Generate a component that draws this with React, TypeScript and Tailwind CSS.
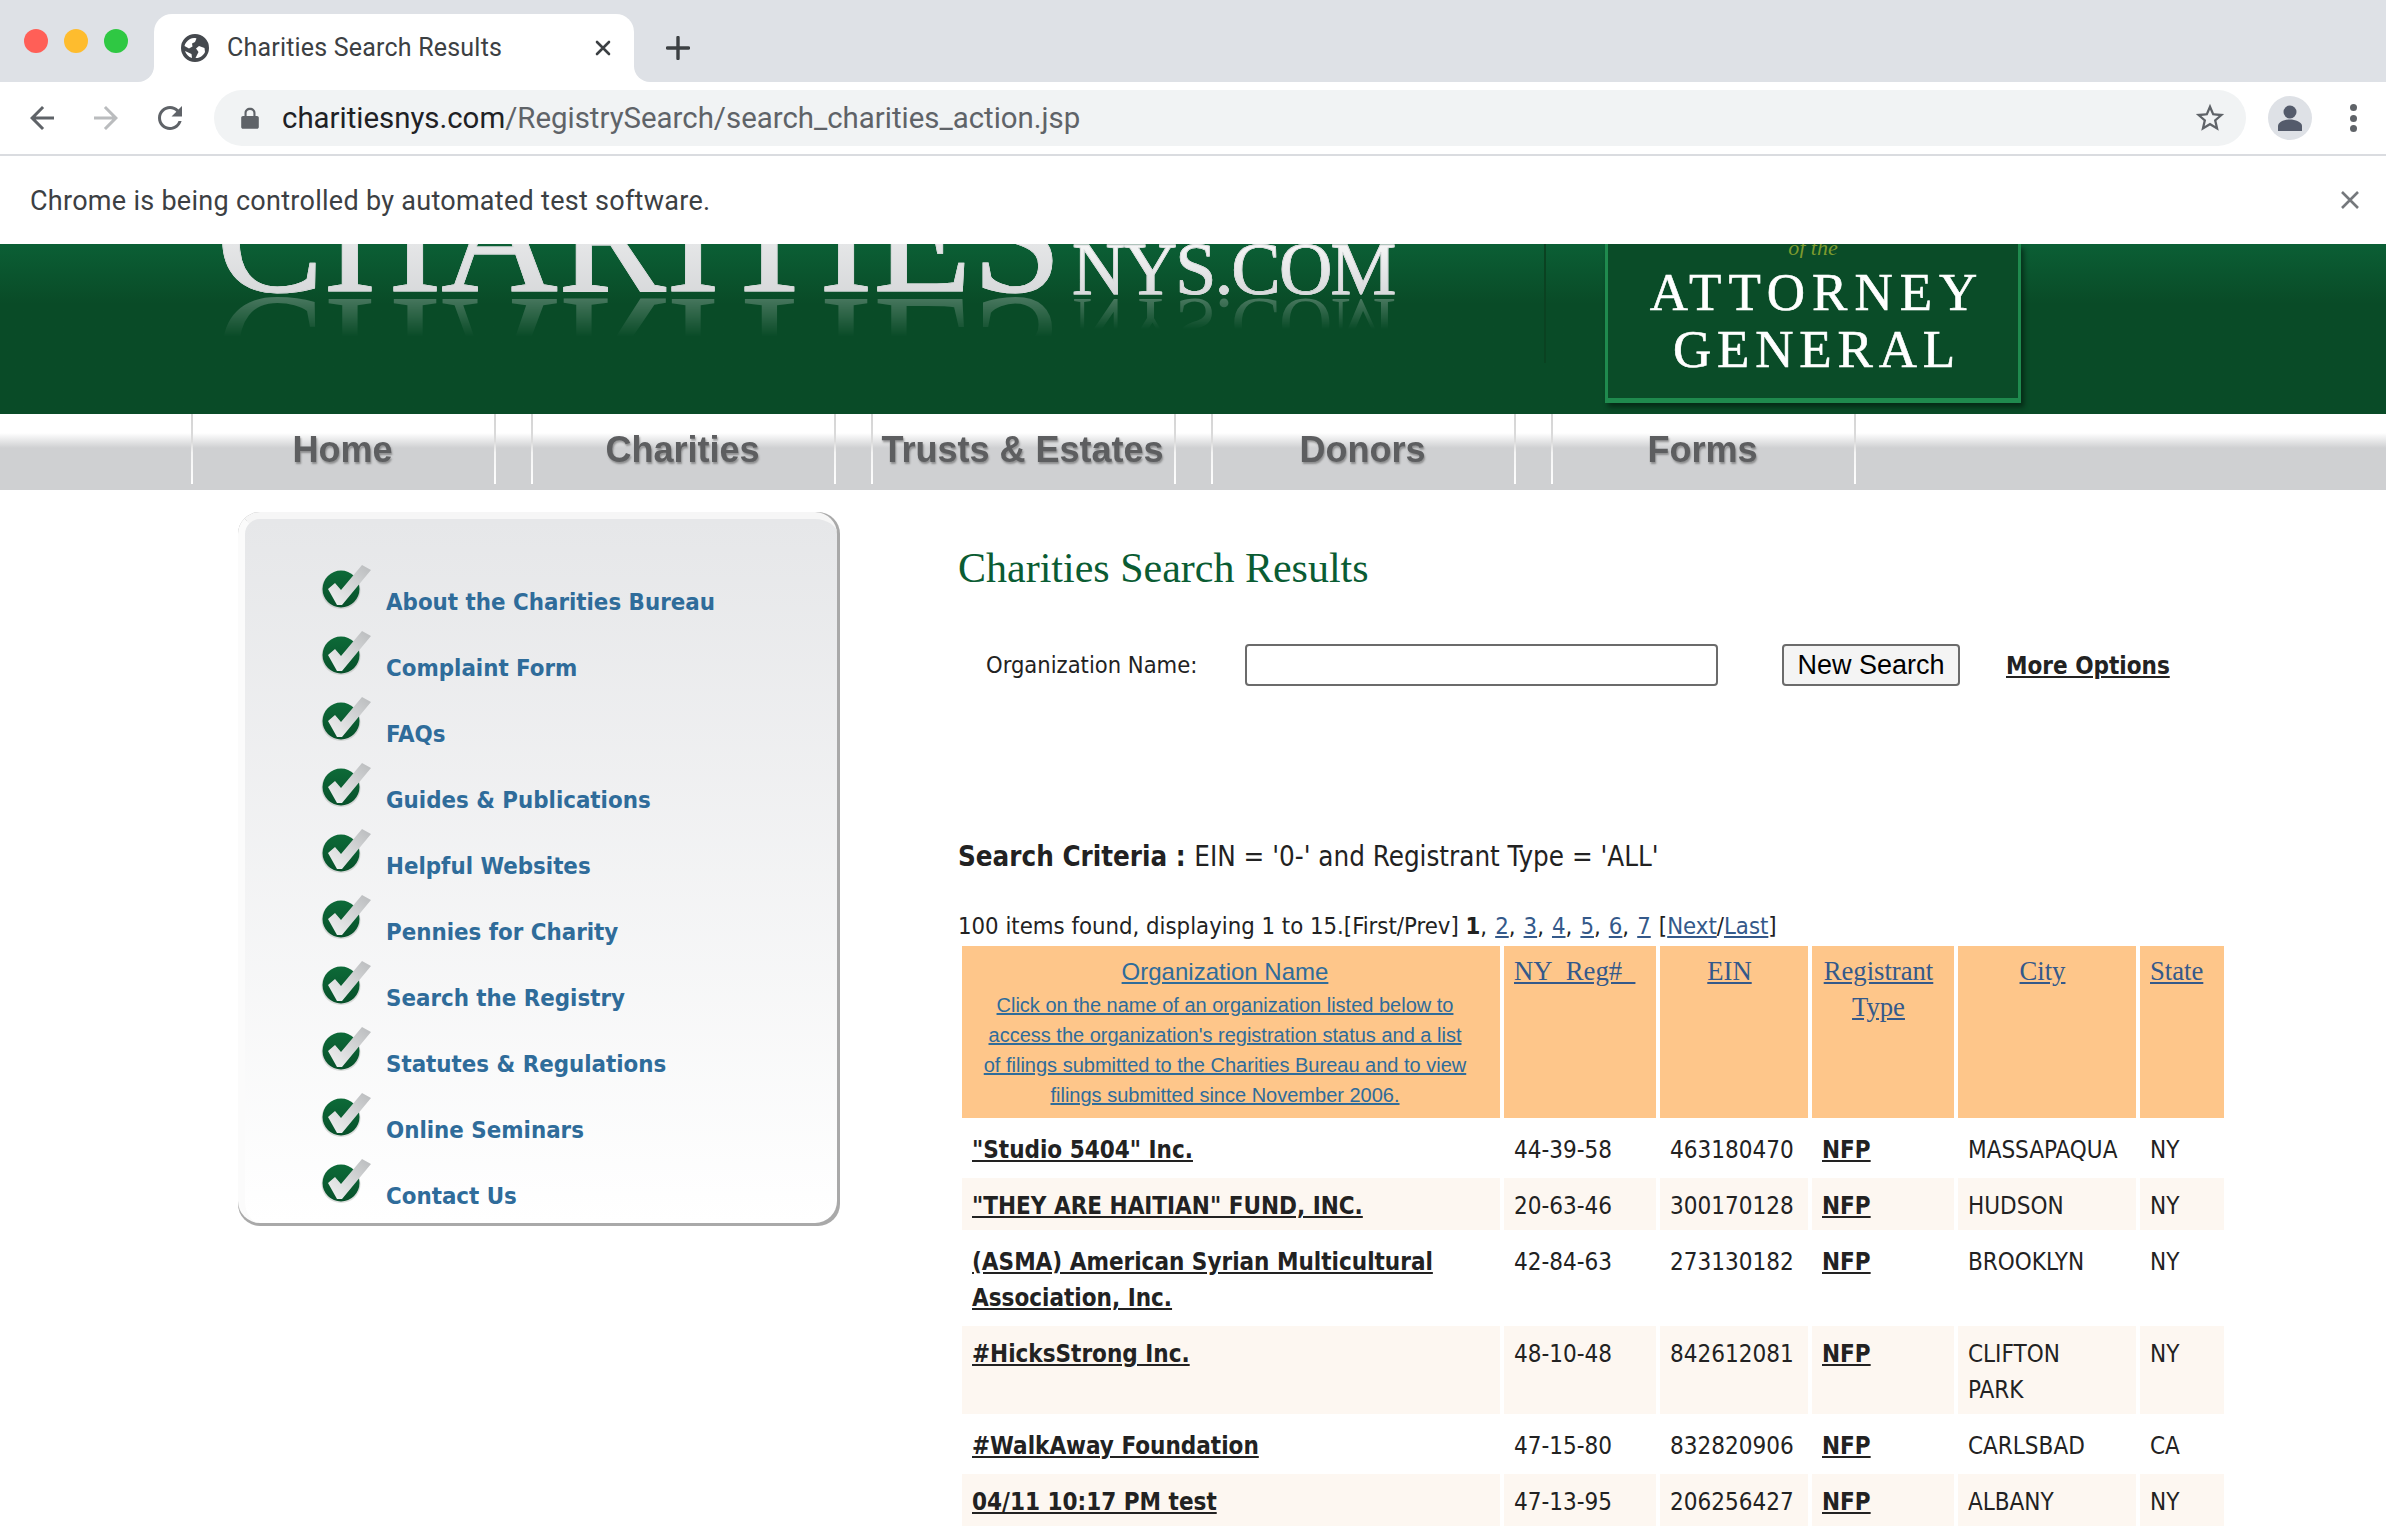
import * as React from "react";

const navItems = ["Home", "Charities", "Trusts & Estates", "Donors", "Forms"];

const sideLinks = [
  "About the Charities Bureau",
  "Complaint Form",
  "FAQs",
  "Guides & Publications",
  "Helpful Websites",
  "Pennies for Charity",
  "Search the Registry",
  "Statutes & Regulations",
  "Online Seminars",
  "Contact Us",
];

const rows = [
  { name: "\"Studio 5404\" Inc.", reg: "44-39-58", ein: "463180470", city: "MASSAPAQUA", state: "NY" },
  { name: "\"THEY ARE HAITIAN\" FUND, INC.", reg: "20-63-46", ein: "300170128", city: "HUDSON", state: "NY" },
  { name: "(ASMA) American Syrian Multicultural Association, Inc.", reg: "42-84-63", ein: "273130182", city: "BROOKLYN", state: "NY" },
  { name: "#HicksStrong Inc.", reg: "48-10-48", ein: "842612081", city: "CLIFTON PARK", state: "NY" },
  { name: "#WalkAway Foundation", reg: "47-15-80", ein: "832820906", city: "CARLSBAD", state: "CA" },
  { name: "04/11 10:17 PM test", reg: "47-13-95", ein: "206256427", city: "ALBANY", state: "NY" },
];

function CheckIcon({ id }: { id: number }) {
  return (
    <svg width="50" height="46" viewBox="0 0 50 46" className="shrink-0">
      <defs>
        <linearGradient id={`ball-${id}`} x1="0" y1="0" x2="0" y2="1">
          <stop offset="0" stopColor="#0d6a38" />
          <stop offset="1" stopColor="#07502a" />
        </linearGradient>
        <linearGradient id={`tick-${id}`} x1="0" y1="1" x2="1" y2="0">
          <stop offset="0" stopColor="#f2f3f3" />
          <stop offset="1" stopColor="#b9bbbd" />
        </linearGradient>
      </defs>
      <ellipse cx="20" cy="26" rx="19.5" ry="19" fill="#9aa09c" opacity="0.35" />
      <circle cx="20" cy="25" r="18.5" fill={`url(#ball-${id})`} />
      <path d="M7 25 L14 19 L20 26 L41 1 L50 6 L21 41 L16 41 Z" fill={`url(#tick-${id})`} />
    </svg>
  );
}

function LogoWord({ text, className, reflectTop, maskClass }: { text: string; className: string; reflectTop: string; maskClass: string }) {
  return (
    <div className={`relative font-['Liberation_Serif',serif] ${className}`}>
      <span className="bg-gradient-to-b from-white to-[#cfd1d3] bg-clip-text text-transparent [-webkit-text-stroke:0.8px_#d9dadc]">{text}</span>
      <span className={`absolute left-0 -scale-y-100 text-[#d8dadc] opacity-30 ${reflectTop} ${maskClass}`}>{text}</span>
    </div>
  );
}

function BrowserChrome() {
  return (
    <div className="font-[Roboto,sans-serif]">
      <div className="flex h-[82px] items-end bg-[#dee1e6]">
        <div className="flex h-[82px] w-[154px] items-center gap-[16px] pb-[1px] pl-[24px]">
          <span className="h-[24px] w-[24px] rounded-full bg-[#ff5f57]" />
          <span className="h-[24px] w-[24px] rounded-full bg-[#febc2e]" />
          <span className="h-[24px] w-[24px] rounded-full bg-[#2fc843]" />
        </div>
        <div className="relative flex h-[68px] w-[480px] items-center rounded-t-[18px] bg-white pl-[26px] pr-[22px]">
          <span className="absolute -left-[16px] bottom-0 h-[16px] w-[16px] bg-white">
            <span className="block h-full w-full rounded-br-[16px] bg-[#dee1e6]" />
          </span>
          <span className="absolute -right-[16px] bottom-0 h-[16px] w-[16px] bg-white">
            <span className="block h-full w-full rounded-bl-[16px] bg-[#dee1e6]" />
          </span>
          <svg width="30" height="30" viewBox="0 0 30 30" fill="#45494e">
            <path
              fillRule="evenodd"
              d="M15 1 A14 14 0 1 1 15 29 A14 14 0 1 1 15 1 Z M10 6 C7 7.5 5 10.5 4.5 13 L9 15.5 L12.5 13.5 L12 10.5 L15 9 L16.5 5.5 C14.5 4.6 12 5 10 6 Z M19 13 L16 15.5 L18.5 19 L15.5 25 C19.5 25.5 23.5 22.5 25 19 L24.5 15 Z M5 18 C6 21 8.5 24 12 25 L11.5 21 Z"
            />
          </svg>
          <span className="ml-[17px] flex-1 text-[25px] tracking-[0.2px] text-[#3c4043]">Charities Search Results</span>
          <svg width="18" height="18" viewBox="0 0 18 18" stroke="#3c4043" strokeWidth="2.6" strokeLinecap="round">
            <path d="M3 3 L15 15 M15 3 L3 15" />
          </svg>
        </div>
        <div className="flex h-[68px] items-center pl-[32px]">
          <svg width="24" height="24" viewBox="0 0 24 24" stroke="#3c4043" strokeWidth="3.4" strokeLinecap="round">
            <path d="M12 1.5 V22.5 M1.5 12 H22.5" />
          </svg>
        </div>
      </div>

      <div className="flex h-[72px] items-center bg-white">
        <svg width="36" height="36" viewBox="0 0 24 24" fill="#5f6368" className="ml-[24px]">
          <path d="M20 11H7.83l5.59-5.59L12 4l-8 8 8 8 1.41-1.41L7.83 13H20v-2z" />
        </svg>
        <svg width="36" height="36" viewBox="0 0 24 24" fill="#babcbe" className="ml-[28px] -scale-x-100">
          <path d="M20 11H7.83l5.59-5.59L12 4l-8 8 8 8 1.41-1.41L7.83 13H20v-2z" />
        </svg>
        <svg width="36" height="36" viewBox="0 0 24 24" fill="#5f6368" className="ml-[28px]">
          <path d="M17.65 6.35C16.2 4.9 14.21 4 12 4c-4.42 0-7.99 3.58-7.99 8s3.57 8 7.99 8c3.73 0 6.84-2.55 7.73-6h-2.08c-.82 2.33-3.04 4-5.65 4-3.31 0-6-2.69-6-6s2.69-6 6-6c1.66 0 3.14.69 4.22 1.78L13 11h7V4l-2.35 2.35z" />
        </svg>
        <div className="ml-[26px] flex h-[56px] w-[2032px] items-center rounded-full bg-[#f1f3f4] pl-[27px] pr-[19px]">
          <svg width="18" height="22" viewBox="0 0 18 22" fill="#5f6368">
            <path d="M2 9 H3.5 V6 C3.5 2.8 6 .8 9 .8 S14.5 2.8 14.5 6 V9 H16 C17 9 17.8 9.8 17.8 10.8 V20 C17.8 21 17 21.8 16 21.8 H2 C1 21.8 .2 21 .2 20 V10.8 C.2 9.8 1 9 2 9 Z M5.6 9 H12.4 V6 C12.4 4 10.9 2.9 9 2.9 S5.6 4 5.6 6 Z" fillRule="evenodd" />
          </svg>
          <span className="ml-[23px] flex-1 pt-[1px] text-[29.4px] text-[#202124]">
            charitiesnys.com<span className="text-[#5f6368]">/RegistrySearch/search_charities_action.jsp</span>
          </span>
          <svg width="34" height="34" viewBox="0 0 24 24" fill="#5f6368">
            <path d="M22 9.24l-7.19-.62L12 2 9.19 8.63 2 9.24l5.46 4.73L5.82 21 12 17.27 18.18 21l-1.63-7.03L22 9.24zM12 15.4l-3.76 2.27 1-4.28-3.32-2.88 4.38-.38L12 6.1l1.71 4.04 4.38.38-3.32 2.88 1 4.28L12 15.4z" />
          </svg>
        </div>
        <div className="ml-[22px] flex h-[44px] w-[44px] items-center justify-center rounded-full bg-[#dee1e6]">
          <svg width="26" height="28" viewBox="0 0 26 28" fill="#545b6b">
            <circle cx="13" cy="8" r="6.5" />
            <path d="M1 27 V22 C1 18 8 15.5 13 15.5 S25 18 25 22 V27 Z" />
          </svg>
        </div>
        <div className="ml-[38px] flex flex-col gap-[3.5px]">
          <span className="h-[7px] w-[7px] rounded-full bg-[#5f6368]" />
          <span className="h-[7px] w-[7px] rounded-full bg-[#5f6368]" />
          <span className="h-[7px] w-[7px] rounded-full bg-[#5f6368]" />
        </div>
      </div>

      <div className="flex h-[90px] items-center justify-between border-t-2 border-[#dadce0] bg-white pl-[30px] pr-[27px]">
        <span className="pt-[2px] text-[27px] tracking-[0.28px] text-[#3c4043]">Chrome is being controlled by automated test software.</span>
        <svg width="18" height="18" viewBox="0 0 18 18" stroke="#75787c" strokeWidth="2.6">
          <path d="M1 1 L17 17 M17 1 L1 17" />
        </svg>
      </div>
    </div>
  );
}

function Banner() {
  return (
    <div className="flex h-[170px] items-start overflow-hidden bg-gradient-to-b from-[#0b5f35] via-[#094b27] via-[35%] to-[#094b27]">
      <div className="mt-[-88px] flex w-[1544px] shrink-0 items-baseline pl-[216px]">
        <LogoWord
          text="CHARITIES"
          className="text-[162px] leading-[162px]"
          reflectTop="top-[116px]"
          maskClass="[mask-image:linear-gradient(to_bottom,transparent_60%,black_84%)]"
        />
        <LogoWord
          text="NYS.COM"
          className="ml-[10px] translate-y-[3px] text-[74px] leading-[74px] tracking-[-1.8px]"
          reflectTop="top-[55px]"
          maskClass="[mask-image:linear-gradient(to_bottom,transparent_43%,black_84%)]"
        />
      </div>
      <div className="h-[119px] w-[2px] shrink-0 bg-[#0a4221]" />
      <div className="ml-[59px] flex h-[159px] w-[416px] shrink-0 flex-col items-center border-x-[3px] border-b-[5px] border-[#1f8a4e] bg-[#0a4c28] font-['Liberation_Serif',serif] text-white shadow-[3px_4px_5px_rgba(0,0,0,0.45)]">
        <div className="h-[14px] overflow-hidden text-[22px] leading-[8px] italic text-[#7d9a2e]">of the</div>
        <div className="ml-[8px] mt-[6px] text-[53px] leading-[57px] tracking-[7px] [-webkit-text-stroke:0.6px_#ffffff]">ATTORNEY</div>
        <div className="ml-[8px] text-[53px] leading-[57px] tracking-[5.8px] [-webkit-text-stroke:0.6px_#ffffff]">GENERAL</div>
      </div>
    </div>
  );
}

function NavBar() {
  return (
    <div className="flex h-[76px] items-start gap-[35px] bg-[linear-gradient(to_bottom,#ffffff_0,#ffffff_19px,#cfd0d2_34px,#cfd0d2_100%)] pl-[191px]">
      {navItems.map((item) => (
        <div
          key={item}
          className="flex h-[70px] w-[305px] items-center justify-center border-x-2 pr-[2px] pt-[2px] font-['Liberation_Sans',sans-serif] text-[36px] font-bold text-[#5d5e60] blur-[0.6px] [border-image:linear-gradient(to_bottom,#d4d4d4_0,#dcdcdc_40%,#f4f4f4_55%,#ffffff_100%)_1] [text-shadow:1px_2px_2px_rgba(60,60,60,0.45)]"
        >
          {item}
        </div>
      ))}
    </div>
  );
}

function Sidebar() {
  return (
    <div className="ml-[238px] mt-[22px] h-[714px] w-[602px] shrink-0 rounded-[22px] bg-[#a9a9a9] pb-[3px] pr-[3px]">
      <div className="h-full rounded-[22px] border-l-[7px] border-t-[7px] border-l-[#fbfbfb] border-t-[#f6f6f6] bg-gradient-to-b from-[#e6e7e9] to-white pl-[76px] pt-[45px]">
        {sideLinks.map((link, i) => (
          <div key={link} className="flex h-[66px] items-start">
            <CheckIcon id={i} />
            <a className="ml-[15px] mt-[21px] font-['DejaVu_Sans_Condensed','Noto_Sans',sans-serif] text-[23.8px] font-bold leading-[34px] text-[#2f6c9a]">
              {link}
            </a>
          </div>
        ))}
      </div>
    </div>
  );
}

function ResultsTable() {
  const thSerif = "border-0 bg-[#fec68a] pl-[10px] pt-[7px] align-top font-['Liberation_Serif',serif] text-[26.67px] font-normal leading-[36px] text-[#34598a] underline";
  return (
    <table className="w-[1270px] table-fixed border-separate border-spacing-[4px]">
      <colgroup>
        <col className="w-[538px]" />
        <col className="w-[152px]" />
        <col className="w-[148px]" />
        <col className="w-[142px]" />
        <col className="w-[178px]" />
        <col className="w-[84px]" />
      </colgroup>
      <thead>
        <tr>
          <th className="h-[172px] bg-[#fec68a] pl-[18px] pr-[30px] pt-[8px] align-top font-['Liberation_Sans',sans-serif] font-normal text-[#2f6c9a] underline">
            <div className="text-[24px] leading-[36px]">Organization Name</div>
            <div className="text-[20px] leading-[30px]">
              Click on the name of an organization listed below to access the organization's registration status and a list of filings submitted to the Charities Bureau and to view filings submitted since November 2006.
            </div>
          </th>
          <th className={`${thSerif} whitespace-pre pr-[10px] text-left`}>{"NY\u00a0\u00a0Reg#\u00a0\u00a0"}</th>
          <th className={`${thSerif} pr-[19px] text-center`}>EIN</th>
          <th className={`${thSerif} pr-[19px] text-center`}>Registrant Type</th>
          <th className={`${thSerif} pr-[19px] text-center`}>City</th>
          <th className={`${thSerif} pr-[10px] text-left`}>State</th>
        </tr>
      </thead>
      <tbody className="font-['DejaVu_Sans_Condensed','Noto_Sans',sans-serif] text-[24px] leading-[36px] text-[#222222]">
        {rows.map((r, i) => {
          const bg = i % 2 === 1 ? "bg-[#fdf7f1]" : "bg-white";
          const td = `${bg} pl-[10px] pr-[16px] pb-[6px] pt-[10px] align-top`;
          return (
            <tr key={r.ein}>
              <td className={td}>
                <a className="font-bold underline">{r.name}</a>
              </td>
              <td className={td}>{r.reg}</td>
              <td className={td}>{r.ein}</td>
              <td className={td}>
                <a className="font-bold underline">NFP</a>
              </td>
              <td className={td}>{r.city}</td>
              <td className={td}>{r.state}</td>
            </tr>
          );
        })}
      </tbody>
    </table>
  );
}

function MainContent() {
  return (
    <div className="ml-[118px] w-[1270px] shrink-0 font-['DejaVu_Sans_Condensed','Noto_Sans',sans-serif] text-[#222222]">
      <h1 className="mt-[53px] h-[50px] font-['Liberation_Serif',serif] text-[42px] leading-[50px] text-[#0a5c33]">
        Charities Search Results
      </h1>
      <div className="mt-[51px] flex h-[42px] items-center">
        <span className="ml-[28px] w-[259px] pt-[1px] text-[23.5px]">Organization Name:</span>
        <div className="h-[42px] w-[473px] rounded-[4px] border-2 border-[#6b6b6b] bg-white" />
        <button className="ml-[64px] h-[42px] w-[178px] rounded-[4px] border-2 border-[#6b6b6b] bg-[#f4f4f4] font-['Liberation_Sans',sans-serif] text-[27px] leading-none text-black">
          New Search
        </button>
        <a className="ml-[46px] pt-[1px] text-[24px] font-bold text-[#222222] underline">More Options</a>
      </div>
      <div className="mt-[150px] h-[39px] text-[27.5px] leading-[40px]">
        <span className="font-bold">Search Criteria : </span>EIN = '0-' and Registrant Type = 'ALL'
      </div>
      <div className="mt-[33px] h-[34px] text-[23.7px] leading-[36px]">
        100 items found, displaying 1 to 15.[First/Prev]{" "}
        <span className="[word-spacing:1.3px]">
          <span className="font-bold">1</span>,{" "}
          {[2, 3, 4, 5, 6, 7].map((n, i) => (
            <React.Fragment key={n}>
              <a className="text-[#34598a] underline">{n}</a>
              {i < 5 ? ", " : " "}
            </React.Fragment>
          ))}
          [<a className="text-[#34598a] underline">Next</a>/<a className="text-[#34598a] underline">Last</a>]
        </span>
      </div>
      <ResultsTable />
    </div>
  );
}

export default function App() {
  return (
    <div className="h-[1540px] w-[2386px] overflow-hidden bg-white">
      <BrowserChrome />
      <Banner />
      <NavBar />
      <div className="flex items-start">
        <Sidebar />
        <MainContent />
      </div>
    </div>
  );
}
